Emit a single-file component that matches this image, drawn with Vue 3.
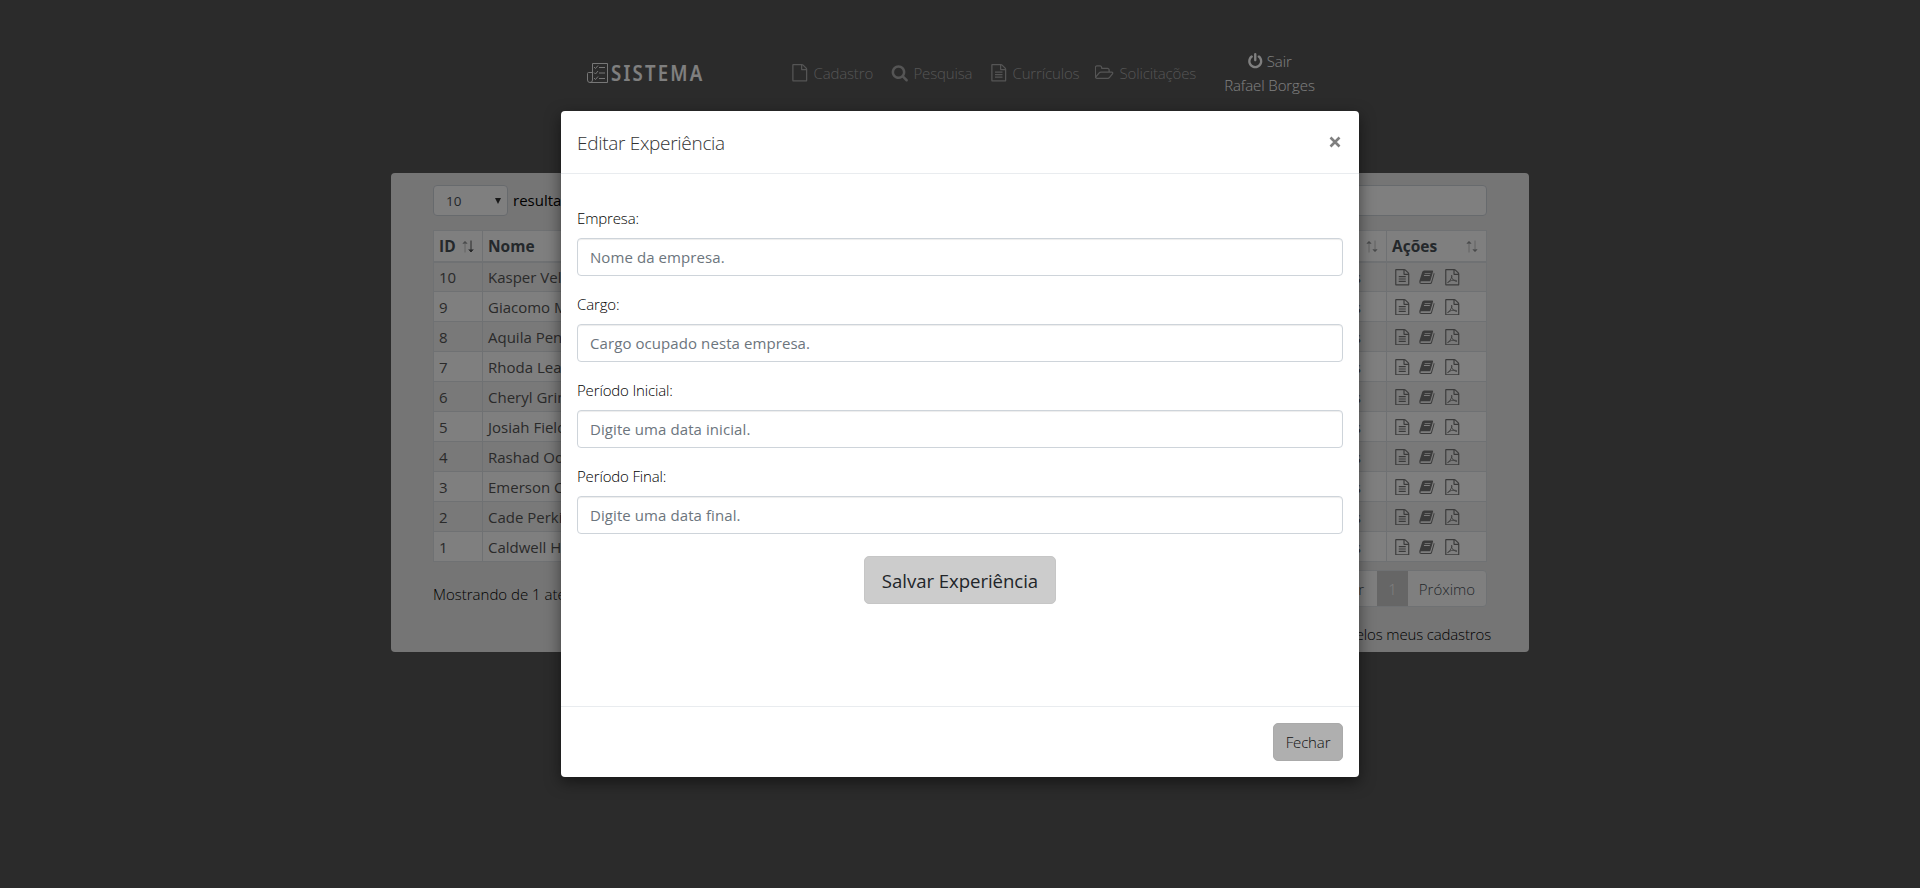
<script setup>
import { ref } from 'vue'

const filePath = 'M1596 380q28 28 48 76t20 88v1152q0 40-28 68t-68 28H224q-40 0-68-28t-28-68V96q0-40 28-68T224 0h896q40 0 88 20t76 48zm-444-244v376h376q-10-29-22-41l-313-313q-12-12-41-22zm384 1528V640h-416q-40 0-68-28t-28-68V128H256v1536h1280z'
const linesPath = 'M512 800q0-14 9-23t23-9h704q14 0 23 9t9 23v64q0 14-9 23t-23 9H544q-14 0-23-9t-9-23v-64zm736 224q14 0 23 9t9 23v64q0 14-9 23t-23 9H544q-14 0-23-9t-9-23v-64q0-14 9-23t23-9h704zm0 256q14 0 23 9t9 23v64q0 14-9 23t-23 9H544q-14 0-23-9t-9-23v-64q0-14 9-23t23-9h704z'
const searchPath = 'M1216 832q0-185-131.5-316.5T768 384 451.5 515.5 320 832t131.5 316.5T768 1280t316.5-131.5T1216 832zm512 832q0 52-38 90t-90 38q-54 0-90-38l-343-342q-179 124-399 124-143 0-273.5-55.5t-225-150-150-225T64 832t55.5-273.5 150-225 225-150T768 128t273.5 55.5 225 150 150 225T1472 832q0 220-124 399l343 343q37 37 37 90z'
const powerPath = 'M1664 896q0 156-61 298t-164 245-245 164-298 61-298-61-245-164-164-245-61-298q0-182 80.5-343t226.5-270q43-32 95.5-25t83.5 50q32 42 24.5 94.5t-49.5 84.5q-98 74-151.5 181t-53.5 228q0 104 40.5 198.5t109.5 163.5 163.5 109.5 198.5 40.5 198.5-40.5 163.5-109.5 109.5-163.5 40.5-198.5q0-121-53.5-228t-151.5-181q-42-32-49.5-84.5t24.5-94.5q31-43 84-50t95 25q146 109 226.5 270t80.5 343zm-640-768v640q0 52-38 90t-90 38-90-38-38-90v-640q0-52 38-90t90-38 90 38 38 90z'
const folderPath = 'M1845 931q0-35-53-35h-1088q-40 0-85.5 21.5t-71.5 52.5l-294 363q-18 24-18 40 0 35 53 35h1088q40 0 86-22t71-53l294-363q18-22 18-39zm-1141-163h768v-160q0-40-28-68t-68-28h-576q-40 0-68-28t-28-68v-64q0-40-28-68t-68-28h-320q-40 0-68 28t-28 68v853l256-315q44-53 116-87.5t140-34.5zm1269 163q0 62-46 120l-295 363q-43 53-116 87.5t-140 34.5h-1088q-92 0-158-66t-66-158v-960q0-92 66-158t158-66h320q92 0 158 66t66 158v32h544q92 0 158 66t66 158v160h192q54 0 99 24.5t67 70.5q15 32 15 68z'

const nav = [
  { label: 'Cadastro', cls: 'n1', box: '0 0 1792 1792', d: filePath },
  { label: 'Pesquisa', cls: 'n2', box: '0 0 1792 1792', d: searchPath },
  { label: 'Currículos', cls: 'n3', box: '0 0 1792 1792', d: filePath + linesPath },
  { label: 'Solicitações', cls: 'n4', box: '128 0 1920 1792', d: folderPath },
]
const rows = [
  [10, 'Kasper Velez'], [9, 'Giacomo Mills'], [8, 'Aquila Pena'], [7, 'Rhoda Leach'], [6, 'Cheryl Grimes'],
  [5, 'Josiah Fields'], [4, 'Rashad Odom'], [3, 'Emerson Cole'], [2, 'Cade Perkins'], [1, 'Caldwell Hull'],
]
const fields = ref([
  { label: 'Empresa:', hint: 'Nome da empresa.', value: '' },
  { label: 'Cargo:', hint: 'Cargo ocupado nesta empresa.', value: '' },
  { label: 'Período Inicial:', hint: 'Digite uma data inicial.', value: '' },
  { label: 'Período Final:', hint: 'Digite uma data final.', value: '' },
])
</script>

<template>
  <div class="page">
    <header class="top">
      <div class="logo">
        <svg width="22" height="21" viewBox="0 0 22 21" fill="none" stroke="currentColor" stroke-width="1">
          <path d="M5.5 .5h15v19H3Q.5 19.5.5 17V10.5q0-1 1-1h4zM5.5 9v8q0 2.5-2.5 2.5M7 4l1.500 1.500L11 2.500M7 9.500L8.500 11 11 8M7 15l1.500 1.500L11 13.500M12 4.500h6M12 10h6M12 15.500h6" />
        </svg>
        <span class="brand">SISTEMA</span>
      </div>
      <nav class="nav">
        <a v-for="n in nav" :key="n.label" :class="n.cls">
          <svg class="ico" :viewBox="n.box"><path :d="n.d" /></svg><span>{{ n.label }}</span>
        </a>
      </nav>
      <div class="user">
        <div class="exit"><svg viewBox="0 0 1792 1792"><path :d="powerPath" /></svg><span>Sair</span></div>
        <div class="who">Rafael Borges</div>
      </div>
    </header>

    <main class="panel">
      <div class="controls">
        <div class="len"><span>10</span><i></i></div>
        <span class="res">resultados por página</span>
        <div class="search"></div>
      </div>
      <table>
        <colgroup><col class="c1" /><col class="c2" /><col class="c3" /><col class="c4" /></colgroup>
        <thead>
          <tr>
            <th v-for="(h, i) in ['ID', 'Nome', 'Cadastrado', 'Ações']" :key="h">
              <div class="th">
                <span>{{ h }}</span>
                <svg width="12" height="13" viewBox="0 0 12 13" fill="none" stroke="currentColor">
                  <path class="arrow" d="M3 12.500V1M.8 3.500L3 1l2.200 2.500" />
                  <path :class="['arrow', { on: i === 0 }]" d="M9 .5V12M6.800 9.500L9 12l2.200-2.500" />
                </svg>
              </div>
            </th>
          </tr>
        </thead>
        <tbody>
          <tr v-for="r in rows" :key="r[0]">
            <td>{{ r[0] }}</td>
            <td>{{ r[1] }}</td>
            <td class="by">Rafael Borges</td>
            <td>
              <div class="acts">
                <svg viewBox="0 0 1792 1792"><path :d="filePath + linesPath" /></svg>
                <svg viewBox="0 0 17 17">
                  <path d="M5.400 1.500h8.300q1.100 0 .8 1.100l-2.700 9.200q-.3.900-1.300.9H2.400q-1 0-1 .9 0 .7 1 .7h9q.8 0 1-.7l2.900-9.700q.9.500.6 1.500l-2.600 8.900q-.4 1.200-1.600 1.200H2.200Q.2 15.500.3 13.400q0-1 .5-2.200l2.500-8q.5-1.700 2.100-1.700zM6 4l-.3 1h6l.3-1zM5.300 6.300l-.3 1h6l.3-1z" fill-rule="evenodd" />
                </svg>
                <svg viewBox="0 0 1792 1792">
                  <path :d="filePath" />
                  <path class="pdf" d="M420 1500Q590 1380 760 1060T830 680Q790 760 860 980T1260 1330Q1420 1380 1400 1300T1100 1210T560 1350T420 1500Z" />
                </svg>
              </div>
            </td>
          </tr>
        </tbody>
      </table>
      <div class="foot">
        <span class="info">Mostrando de 1 até 10 de 10 registros</span>
        <div class="pages"><span class="prev">Anterior</span><span class="cur">1</span><span class="next">Próximo</span></div>
      </div>
      <div class="mine">Buscar somente pelos meus cadastros</div>
    </main>

    <div class="backdrop">
      <section class="modal">
        <div class="mhead">
          <h5>Editar Experiência</h5>
          <svg width="12" height="12" viewBox="0 0 12 12"><path d="M1.500 1.500l9 9M10.500 1.500l-9 9" /></svg>
        </div>
        <div class="mbody">
          <div v-for="f in fields" :key="f.label" class="field">
            <label>{{ f.label }}</label>
            <input v-model="f.value" type="text" :placeholder="f.hint" />
          </div>
          <button class="save">Salvar Experiência</button>
        </div>
        <div class="mfoot"><button class="close">Fechar</button></div>
      </section>
    </div>
  </div>
</template>

<style>
html, body { background: #565656; overflow: hidden; }
</style>

<style scoped>
* { box-sizing: border-box; }
.page { position: relative; width: 1920px; height: 888px; overflow: hidden; background: #565656; font-family: "Open Sans", "Noto Sans", sans-serif; font-size: 15px; font-weight: 300; color: #212529; }
svg { display: block; fill: currentColor; flex: none; }
.top { display: flex; height: 173px; padding-left: 587px; }
.logo { display: flex; width: 204px; padding-top: 63px; color: #fff; }
.logo svg { fill: none; color: #eee; }
.brand { font-family: "Noto Sans", sans-serif; font-weight: 600; font-size: 22px; line-height: 22px; letter-spacing: 2.6px; margin: -2px 0 0 2px; transform: scaleX(.845); transform-origin: 0 0; }
.nav { display: flex; width: 433px; padding-top: 61px; color: #aaa; }
.nav a { display: flex; align-items: center; height: 24px; white-space: nowrap; letter-spacing: -.15px; }
.nav .ico { width: 17.5px; height: 17.5px; margin-right: 5px; }
.n1 { width: 100px; }
.n2 { width: 99px; }
.n3 { width: 105px; }
.nav .n4 .ico { width: 19.5px; }
.user { display: flex; flex-direction: column; align-items: center; width: 91px; padding-top: 49px; color: #fff; line-height: 24px; white-space: nowrap; letter-spacing: -.1px; }
.exit { display: flex; align-items: center; gap: 3px; height: 24px; }
.exit svg { width: 16.5px; height: 16.5px; }
.panel { width: 1138px; height: 479px; margin-left: 391px; background: #ebebeb; border-radius: 4px; padding: 12px 42px 0 42px; }
.controls { display: flex; height: 31px; align-items: center; }
.len { display: flex; align-items: center; justify-content: space-between; width: 75px; height: 31px; border: 1px solid #ced4da; border-radius: 4px; background: #fff; padding: 0 6px 0 12px; font-size: 13.5px; font-weight: 400; color: #495057; }
.len i { border: 3.5px solid transparent; border-top: 6px solid #333; border-bottom: 0; }
.res { margin: -2px 0 0 5px; font-weight: 400; color: #000; }
.search { margin-left: auto; width: 220px; height: 31px; background: #fff; border: 1px solid #ced4da; border-radius: 4px; }
table { width: 1054px; margin-top: 14px; border-collapse: collapse; table-layout: fixed; background: #fff; font-weight: 400; color: #555; }
.c1 { width: 49px; }
.c2 { width: 320px; }
.c4 { width: 100px; }
th, td { height: 30px; padding: 0 5px; border: 1px solid #dee2e6; text-align: left; line-height: 24px; white-space: nowrap; overflow: hidden; }
th { border-bottom-width: 2px; font-weight: 700; font-size: 15.5px; color: #495057; height: 31px; }
.th { display: flex; justify-content: space-between; align-items: center; padding-right: 3px; }
.th svg { margin-top: 2px; }
.arrow { stroke: #c4c4c4; }
.arrow.on { stroke: #555; }
tbody tr:nth-child(odd) { background: #f2f2f2; }
td.by { text-align: right; padding-right: 25px; }
.acts { display: flex; gap: 8.5px; padding: 1px 0 0 2px; color: #777; }
.acts svg { width: 16.5px; height: 16.5px; }
.pdf { fill: none; stroke: currentColor; stroke-width: 90; }
.foot { display: flex; justify-content: space-between; height: 38px; margin-top: 8px; }
.info { padding-top: 12px; line-height: 24px; color: #000; }
.pages { display: flex; height: 37px; line-height: 36px; background: #fff; border: 1px solid #dee2e6; border-radius: 4px; color: #495057; }
.prev { padding: 0 13px; }
.cur { width: 31px; background: #ccc; color: #fff; text-align: center; }
.next { width: 78px; text-align: center; }
.mine { text-align: right; margin-right: -4px; margin-top: 14px; line-height: 24px; color: #000; letter-spacing: -.15px; }
.backdrop { position: absolute; inset: 0; display: flex; justify-content: center; align-items: flex-start; padding-top: 111px; background: rgba(0, 0, 0, .5); }
.modal { display: flex; flex-direction: column; width: 798px; height: 666px; background: #fff; border-radius: 4px; box-shadow: 0 5px 15px rgba(0, 0, 0, .5); }
.mhead { display: flex; justify-content: space-between; align-items: center; height: 63px; padding: 0 18px 0 16px; border-bottom: 1px solid #e9ecef; }
h5 { margin: 2px 0 0; font-size: 19px; font-weight: 300; color: #333; letter-spacing: -.3px; }
.mhead svg { stroke: #7f7f7f; stroke-width: 2.6; }
.mbody { display: flex; flex-direction: column; flex: 1; padding: 32px 16px 0; }
.field { display: flex; flex-direction: column; height: 86px; }
label { height: 32px; line-height: 24px; letter-spacing: -.15px; color: #000; }
input { height: 38px; border: 1px solid #ced4da; border-radius: 4px; padding: 0 12px; font-family: inherit; font-size: 15px; letter-spacing: .08px; color: #495057; box-shadow: inset 0 1px 1px rgba(0, 0, 0, .075); }
input::placeholder { color: #6c757d; opacity: 1; }
button { font-family: inherit; padding: 0; border-radius: 5px; white-space: nowrap; }
.save { align-self: center; width: 192px; height: 48px; margin-top: 6px; padding-top: 1px; border: 1px solid #c6c6c6; background: #ccc; color: #212529; font-size: 18.6px; letter-spacing: -.05px; }
.mfoot { display: flex; justify-content: flex-end; height: 71px; border-top: 1px solid #e9ecef; padding: 16px; }
.close { width: 70px; height: 38px; border: 1px solid #aaa; background: #afafaf; color: #111; font-size: 15px; font-weight: 300; letter-spacing: -.15px; }
</style>
